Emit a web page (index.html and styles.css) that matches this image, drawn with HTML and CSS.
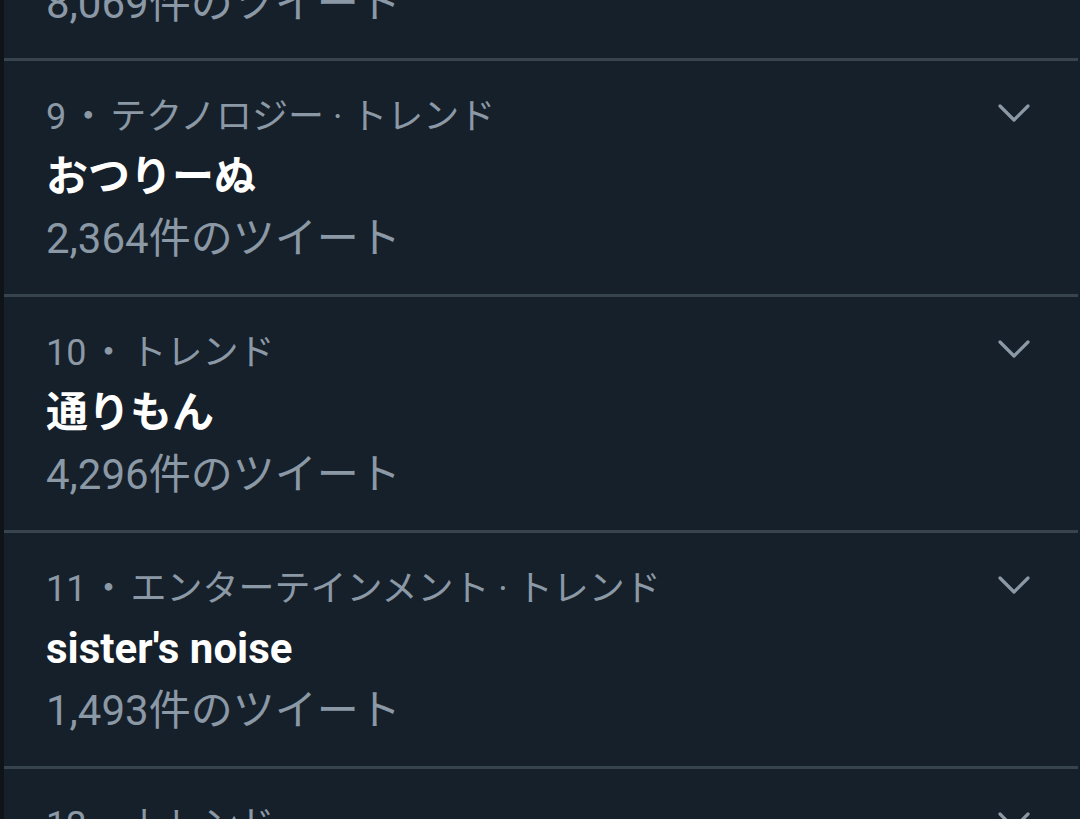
FILE: index.html
```html
<!DOCTYPE html>
<html lang="ja">
<head>
<meta charset="utf-8">
<title>トレンド</title>
<link rel="stylesheet" href="styles.css">
</head>
<body>
<main class="list">
  <section class="row row-partial-top">
    <div class="info">
      <div class="count">8,069件のツイート</div>
    </div>
  </section>

  <section class="row">
    <div class="info">
      <div class="meta">9<span class="sep">・</span>テクノロジー · トレンド</div>
      <div class="title">おつりーぬ</div>
      <div class="count">2,364件のツイート</div>
    </div>
    <svg class="chev" viewBox="0 0 32 20" width="32" height="20" aria-hidden="true"><polyline points="2,3 16,17 30,3" /></svg>
  </section>

  <section class="row">
    <div class="info">
      <div class="meta">10<span class="sep">・</span>トレンド</div>
      <div class="title">通りもん</div>
      <div class="count">4,296件のツイート</div>
    </div>
    <svg class="chev" viewBox="0 0 32 20" width="32" height="20" aria-hidden="true"><polyline points="2,3 16,17 30,3" /></svg>
  </section>

  <section class="row">
    <div class="info">
      <div class="meta">11<span class="sep">・</span>エンターテインメント · トレンド</div>
      <div class="title latin">sister's noise</div>
      <div class="count">1,493件のツイート</div>
    </div>
    <svg class="chev" viewBox="0 0 32 20" width="32" height="20" aria-hidden="true"><polyline points="2,3 16,17 30,3" /></svg>
  </section>

  <section class="row">
    <div class="info">
      <div class="meta">12<span class="sep">・</span>トレンド</div>
    </div>
    <svg class="chev" viewBox="0 0 32 20" width="32" height="20" aria-hidden="true"><polyline points="2,3 16,17 30,3" /></svg>
  </section>
</main>
</body>
</html>
```

FILE: styles.css
```css
html, body {
  margin: 0;
  padding: 0;
  height: 819px;
  overflow: hidden;
  background: #16202a;
}

body {
  font-family: Roboto, "Noto Sans CJK JP", sans-serif;
  color: #8b98a5;
}

.list {
  border-left: 4px solid #0e141a;
  margin-right: 2px;
  min-height: 819px;
  display: flex;
  flex-direction: column;
}

.row {
  display: flex;
  justify-content: space-between;
  align-items: flex-start;
  padding: 32px 48px 30px 42px;
  border-top: 3px solid #38444d;
}

.row-partial-top {
  border-top: none;
  padding-top: 0;
  padding-bottom: 29px;
  margin-top: -22px;
}

.info {
  display: flex;
  flex-direction: column;
}

.meta {
  font-size: 36px;
  line-height: 48px;
  color: #8b98a5;
  white-space: nowrap;
}

.sep {
  margin: 0 4px;
}

.title {
  font-size: 42px;
  line-height: 72px;
  font-weight: 700;
  color: #ffffff;
  white-space: nowrap;
}

.count {
  font-size: 42px;
  line-height: 51px;
  color: #8b98a5;
  white-space: nowrap;
}

.chev {
  margin-top: 10px;
  flex: none;
}

.chev polyline {
  fill: none;
  stroke: #8b98a5;
  stroke-width: 3.2;
  stroke-linecap: round;
  stroke-linejoin: round;
}
```
